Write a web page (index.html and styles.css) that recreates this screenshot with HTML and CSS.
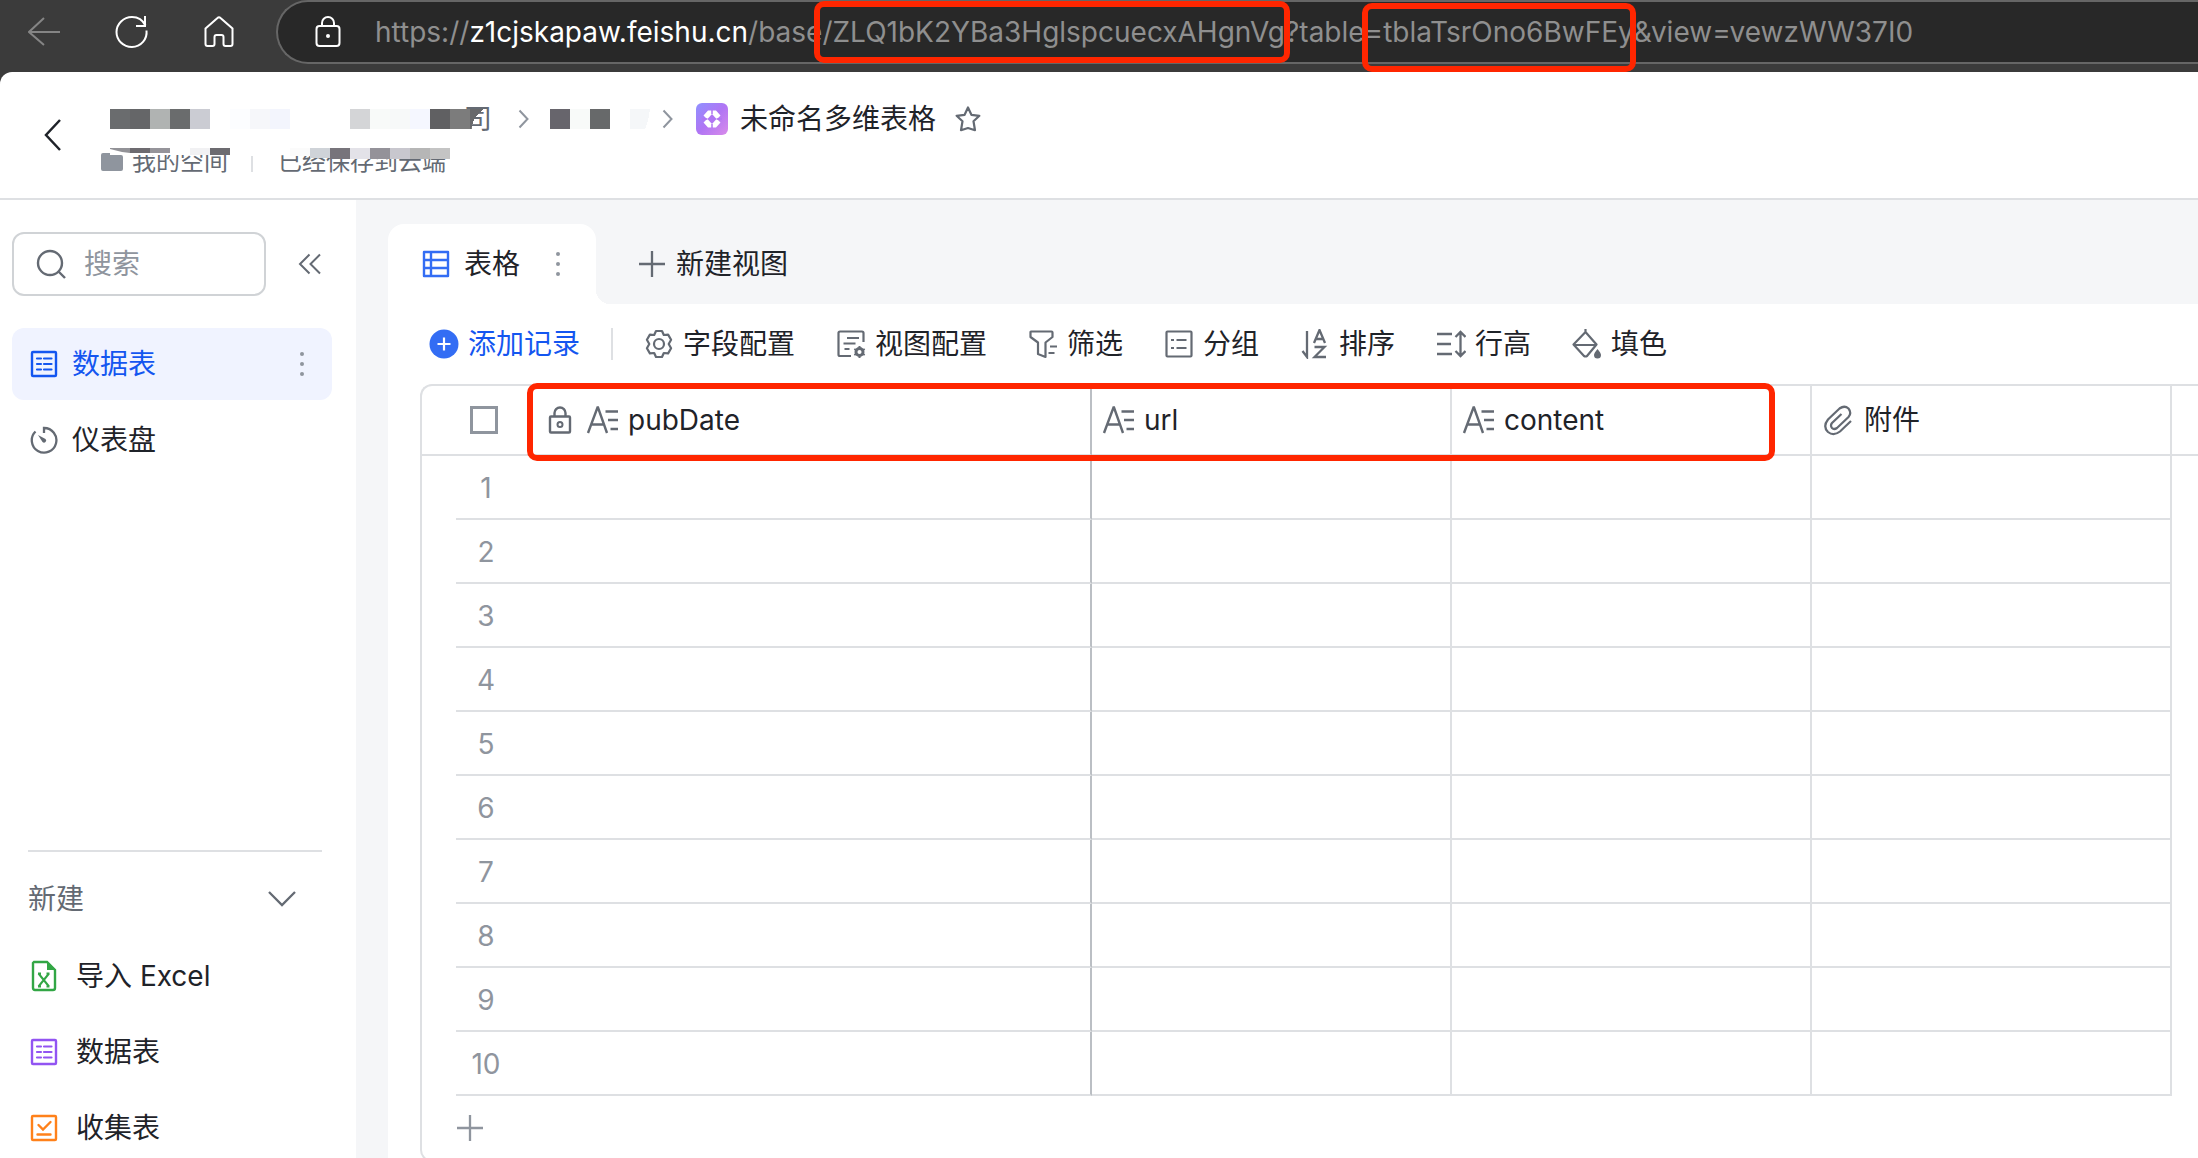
FILE: index.html
```html
<!DOCTYPE html>
<html lang="zh-CN">
<head>
<meta charset="utf-8">
<title>未命名多维表格</title>
<link rel="stylesheet" href="styles.css">
</head>
<body>
<svg class="defs" aria-hidden="true">
  <symbol id="i-text" viewBox="0 0 32 32"><path d="M2 29 11.500 3.500h.5L21 29M5.500 20.500h12.500M19.500 7.500H32M22 16h10M24.500 25H32" fill="none" stroke="currentColor" stroke-width="2.400"/></symbol>
  <symbol id="i-table" viewBox="0 0 28 28"><rect x="2" y="2" width="24" height="24" rx="1" fill="none" stroke="currentColor" stroke-width="2.400"/><path d="M7 8.500h4M7 14h4M7 19.500h4M14 8.500h7.500M14 14h7.500M14 19.500h7.500" fill="none" stroke="currentColor" stroke-width="2.200" stroke-linecap="round"/></symbol>
  <symbol id="i-dots" viewBox="0 0 8 28"><g fill="#8f959e"><circle cx="4" cy="4" r="2"/><circle cx="4" cy="14" r="2"/><circle cx="4" cy="24" r="2"/></g></symbol>
  <symbol id="i-next" viewBox="0 0 12 20"><path d="M1.500 1.500 9.500 10 1.500 18.500" fill="none" stroke="#8f959e" stroke-width="2"/></symbol>
</svg>

<div class="browser">
  <button class="nav" aria-label="后退"><svg width="32" height="32" viewBox="0 0 32 32"><path d="M32 16H1M16 2 1 16l15 13" fill="none" stroke="#858585" stroke-width="2"/></svg></button>
  <button class="nav" aria-label="刷新"><svg width="34" height="34" viewBox="0 0 34 34"><path d="M31.500 15.500C32.500 24 26 32 17 32S1.500 25 1.500 17 8.500 2 17 2c6 0 11 3.500 13.500 8.500M30 1v10h-9" fill="none" stroke="#fff" stroke-width="2"/></svg></button>
  <button class="nav" aria-label="主页"><svg width="30" height="32" viewBox="0 0 30 32"><path d="M1.500 12.500 13.500 2q1.500-1.500 3 0l12 10.500V28q0 2-2 2h-5q-2 0-2-2v-7q0-2-2-2h-5q-2 0-2 2v7q0 2-2 2h-5q-2 0-2-2Z" fill="none" stroke="#fff" stroke-width="2"/></svg></button>
  <div class="address">
    <svg width="26" height="32" viewBox="0 0 26 32"><rect x="1.500" y="10" width="23" height="20" rx="3" fill="none" stroke="#fff" stroke-width="2"/><path d="M7 10V7a6 6 0 0 1 12 0v3" fill="none" stroke="#fff" stroke-width="2"/><circle cx="13" cy="20" r="2" fill="#fff"/></svg>
    <div class="url">https://<span class="host">z1cjskapaw.feishu.cn</span>/base/ZLQ1bK2YBa3HglspcuecxAHgnVg?table=tblaTsrOno6BwFEy&amp;view=vewzWW37I0</div>
  </div>
</div>

<div class="app">
  <header class="header">
    <button class="back" aria-label="返回"><svg width="18" height="32" viewBox="0 0 18 32"><path d="M16 1 2 16l14 15" fill="none" stroke="#1f2329" stroke-width="2.500"/></svg></button>
    <div class="titles">
      <div class="crumbs">
        <svg class="mosaic" width="362" height="20" viewBox="0 0 362 20" shape-rendering="crispEdges">
          <path fill="#6a6c6e" d="M0 0h20v20H0z"/><path fill="#656668" d="M20 0h20v20H20z"/><path fill="#b0b3b2" d="M40 0h20v20H40z"/><path fill="#6a6c6d" d="M60 0h20v20H60z"/><path fill="#cbccd3" d="M80 0h20v20H80z"/>
          <path fill="#fcfdff" d="M120 0h20v20h-20z"/><path fill="#f6f7fa" d="M140 0h20v20h-20z"/><path fill="#f3f5fd" d="M160 0h20v20h-20z"/>
          <path fill="#d4d5d7" d="M240 0h20v20h-20z"/><path fill="#f8faf9" d="M260 0h20v20h-20z"/><path fill="#f7f9f9" d="M280 0h20v20h-20z"/><path fill="#f5f7ff" d="M300 0h20v20h-20z"/><path fill="#606062" d="M320 0h20v20h-20z"/><path fill="#7c7c7c" d="M340 0h22v20h-22z"/><path fill="#68696b" d="M360 0h14q-10 6-13 20h-1z"/>
        </svg>
        <span class="tail">司</span>
        <svg class="next" width="12" height="20"><use href="#i-next"/></svg>
        <svg width="100" height="20" viewBox="0 0 100 20" shape-rendering="crispEdges"><path fill="#67656c" d="M0 0h20v20H0z"/><path fill="#f8faf9" d="M20 0h20v20H20z"/><path fill="#67696a" d="M40 0h20v20H40z"/><path fill="#f5f7f9" d="M80 0h20q-2 14-5 20H80z"/></svg>
        <svg class="next next-last" width="12" height="20"><use href="#i-next"/></svg>
        <svg class="logo" width="32" height="32" viewBox="0 0 32 32"><defs><linearGradient id="lg" x1="0" y1="0" x2="1" y2="1"><stop offset="0" stop-color="#8f91ff"/><stop offset=".5" stop-color="#b075f4"/><stop offset="1" stop-color="#d98bea"/></linearGradient></defs><rect width="32" height="32" rx="6" fill="url(#lg)"/><path d="M16 7.500 12 7.500 7.500 12.500 11 16 7.500 19.500 12 24.500 16 24.500 20 24.500 24.500 19.500 21 16 24.500 12.500 20 7.500Z" fill="#fff"/><path d="M16 11 20.500 16 16 21 11.500 16Z" fill="#b075f4"/><path d="M16 7v4M16 21v4M6 16h5.500M20.500 16H26" stroke="#b075f4" stroke-width="1.500"/></svg>
        <h1>未命名多维表格</h1>
        <button class="star" aria-label="收藏"><svg width="28" height="28" viewBox="0 0 28 28"><path d="m14 2.500 3.400 7.300 8 1-5.900 5.500 1.500 8.900L14 23l-7 2.200 1.500-8.900L2.600 10.800l8-1Z" fill="none" stroke="#646a73" stroke-width="2.200" stroke-linejoin="round"/></svg></button>
      </div>
      <div class="meta">
        <svg class="folder" width="24" height="20" viewBox="0 0 24 20"><path d="M1 3q0-2 2-2h7l2 2h9q2 0 2 2v12q0 2-2 2H3q-2 0-2-2Z" fill="#8f959e"/></svg>
        <span>我的空间</span>
        <i class="bar"></i>
        <span>已经保存到云端</span>
        <svg class="mosaic-over" width="342" height="11" viewBox="0 0 342 11"><path fill="#fff" d="M0 0h340v8H180V7H0z"/><path fill="#929297" d="M0 0h20v5Q10 4 0 1z"/><path fill="#6d6b70" d="M20 0h20v5H20z"/><path fill="#95949a" d="M40 0h20v5H40z"/><path fill="#f1f1f3" d="M80 0h20v7H80z"/><path fill="#6c6b70" d="M100 0h20v7h-20z"/><path fill="#fbfbfb" d="M180 0h20v8h-20z"/><path fill="#cfd3d8" d="M200 0h20v10h-20z"/><path fill="#77747b" d="M220 0h20v11h-20z"/><path fill="#e3e2e8" d="M240 0h20v11h-20z"/><path fill="#949299" d="M260 0h20v11h-20z"/><path fill="#c8c7ce" d="M280 0h20v11h-20z"/><path fill="#b6b6b6" d="M300 0h20v11h-20z"/><path fill="#c4c4c4" d="M320 0h20v11h-20z"/></svg>
      </div>
    </div>
  </header>

  <div class="body">
    <aside class="sidebar">
      <div class="search-row">
        <label class="search"><svg width="30" height="30" viewBox="0 0 30 30"><circle cx="14" cy="14" r="12" fill="none" stroke="#646a73" stroke-width="2.400"/><path d="m22 22 7 7" stroke="#646a73" stroke-width="2.400"/></svg><input type="text" placeholder="搜索" aria-label="搜索"></label>
        <button class="collapse" aria-label="收起"><svg width="24" height="22" viewBox="0 0 24 22"><path d="M11.500 1.500 2 11l9.500 9.500M22 1.500 12.500 11l9.500 9.500" fill="none" stroke="#646a73" stroke-width="2"/></svg></button>
      </div>
      <nav class="items">
        <a class="item active" href="#data"><svg width="28" height="28"><use href="#i-table"/></svg><span>数据表</span><svg class="more" width="8" height="28"><use href="#i-dots"/></svg></a>
        <a class="item" href="#dash"><svg width="28" height="28" viewBox="0 0 28 28"><path d="M14 7V2a12.300 12.300 0 1 1-8.500 3.500" fill="none" stroke="#646a73" stroke-width="2.300"/><path d="m8 9 7.500 4a1.800 1.800 0 1 1-3 3Z" fill="#646a73"/></svg><span>仪表盘</span></a>
      </nav>
      <section class="create">
        <button class="create-head"><span>新建</span><svg width="28" height="16" viewBox="0 0 28 16"><path d="m1 1 13 13L27 1" fill="none" stroke="#646a73" stroke-width="2.300"/></svg></button>
        <nav class="create-list">
          <a href="#excel"><svg width="28" height="32" viewBox="0 0 28 32"><path d="M4 2h13l8 8v18q0 2-2 2H5q-2 0-2-2V3Z" fill="none" stroke="#32a645" stroke-width="2.400"/><path d="M17 1v9h9Z" fill="#32a645"/><path d="m8.500 13.500 10.500 13M19 13.500l-10.500 13M8 13.500h3M16.500 13.500h3M8 26.500h3M16.500 26.500h3" stroke="#32a645" stroke-width="2"/></svg><span>导入 Excel</span></a>
          <a href="#table"><svg class="violet" width="28" height="28"><use href="#i-table"/></svg><span>数据表</span></a>
          <a href="#form"><svg width="28" height="28" viewBox="0 0 28 28"><g fill="none" stroke="#ff811a" stroke-width="2.400"><rect x="2" y="2" width="24" height="24" rx="1"/><path d="m8.500 11 4.500 4.500 7.500-7.500M7.500 20.500h13" stroke-linecap="round"/></g></svg><span>收集表</span></a>
        </nav>
      </section>
    </aside>

    <main class="main">
      <div class="tabs">
        <div class="tab"><svg width="28" height="28" viewBox="0 0 28 28"><path d="M2 2h24v24H2ZM9 2v24M2 10h24M2 18h24" fill="none" stroke="#336df4" stroke-width="2.400" stroke-linejoin="round"/></svg><span>表格</span><button class="tab-more" aria-label="更多"><svg width="8" height="28"><use href="#i-dots"/></svg></button></div>
        <button class="new-view"><svg width="28" height="28" viewBox="0 0 28 28"><path d="M14 1v26M1 14h26" stroke="#646a73" stroke-width="2.300"/></svg>新建视图</button>
      </div>
      <div class="panel">
        <div class="toolbar">
          <button class="add"><svg width="30" height="30" viewBox="0 0 30 30"><circle cx="15" cy="15" r="14.500" fill="#336df4"/><path d="M15 8.500v13M8.500 15h13" stroke="#fff" stroke-width="2.200"/></svg>添加记录</button>
          <i class="sep"></i>
          <button><svg width="30" height="30" viewBox="0 0 30 30"><path d="M12 2h6l1.800 4 4.300-.4 3 5.200L24.700 15l2.400 4.200-3 5.200-4.300-.4L18 28h-6l-1.800-4-4.300.4-3-5.200L5.300 15l-2.400-4.200 3-5.200 4.300.4Z" fill="none" stroke="#646a73" stroke-width="2.200" stroke-linejoin="round"/><circle cx="15" cy="15" r="5" fill="none" stroke="#646a73" stroke-width="2.200"/></svg>字段配置</button>
          <button><svg width="30" height="30" viewBox="0 0 30 30"><path d="M15 27H4q-1.500 0-1.500-1.500V4Q2.500 2.500 4 2.500h22q1.500 0 1.500 1.500v9M11 9h12M7.500 14.500h12M8.500 20h5" fill="none" stroke="#646a73" stroke-width="2.200"/><circle cx="23.500" cy="23" r="3.500" fill="none" stroke="#646a73" stroke-width="3"/><path d="M23.500 17v12M18.300 20l10.400 6M18.300 26l10.400-6" stroke="#646a73" stroke-width="2"/><circle cx="23.500" cy="23" r="2" fill="#fff"/></svg>视图配置</button>
          <button><svg width="30" height="30" viewBox="0 0 30 30"><path d="M3 2.500h20.500q1 0 1 1V8l-7 5.500V28L10 25V13.500L2.500 8V3Z" fill="none" stroke="#646a73" stroke-width="2.200" stroke-linejoin="round"/><path d="M22 17.500h7M20.500 24h6" stroke="#646a73" stroke-width="2.200"/></svg>筛选</button>
          <button><svg width="30" height="30" viewBox="0 0 30 30"><rect x="2.500" y="2.500" width="25" height="25" rx="1" fill="none" stroke="#646a73" stroke-width="2.200"/><path d="M7 11h3M7 19h3M12.500 11h10M12.500 19h10" stroke="#646a73" stroke-width="2.200"/></svg>分组</button>
          <button><svg width="30" height="30" viewBox="0 0 30 30"><path d="M7 2v26L2.500 22M14 14l5.500-13L25 14M16 10h7M14.500 18h10L14.500 28H26" fill="none" stroke="#646a73" stroke-width="2.300"/></svg>排序</button>
          <button><svg width="30" height="30" viewBox="0 0 30 30"><path d="M1 5h15M1 15h14M1 25h15M24.500 3v24M19.500 8l5-5 5 5M19.500 22l5 5 5-5" fill="none" stroke="#646a73" stroke-width="2.300"/></svg>行高</button>
          <button><svg width="30" height="30" viewBox="0 0 30 30"><path d="M13.500 0v3M13.500 3 24.500 15.500 15 27q-1.500 1-3 0L1.500 15.500ZM2 16h22" fill="none" stroke="#646a73" stroke-width="2.200" stroke-linejoin="round"/><path d="M25.500 20q3.500 4 3.500 6a3.500 3.500 0 0 1-7 0q0-2 3.500-6Z" fill="#646a73"/></svg>填色</button>
        </div>
        <div class="grid">
          <table>
            <colgroup><col class="c-gap"><col class="c-num"><col class="c-main"><col class="c"><col class="c"><col class="c"><col></colgroup>
            <thead><tr>
              <th></th><th class="check"><input type="checkbox" aria-label="全选"></th>
              <th class="primary"><div class="field lead"><svg class="lock" width="24" height="28" viewBox="0 0 24 28"><rect x="2" y="10.500" width="20" height="16" rx="1" fill="none" stroke="currentColor" stroke-width="2.400"/><path d="M6.500 10V7a5.500 5.500 0 0 1 11 0v3" fill="none" stroke="currentColor" stroke-width="2.400"/><circle cx="12" cy="18.500" r="2.500" fill="none" stroke="currentColor" stroke-width="2"/></svg><svg width="32" height="32"><use href="#i-text"/></svg><span>pubDate</span></div></th>
              <th class="col"><div class="field"><svg width="32" height="32"><use href="#i-text"/></svg><span>url</span></div></th>
              <th class="col"><div class="field"><svg width="32" height="32"><use href="#i-text"/></svg><span>content</span></div></th>
              <th class="col"><div class="field"><svg width="32" height="32" viewBox="0 0 32 32"><path d="M29 17 18 27.500Q11.500 32.500 6 28 .500 22.500 6 15.500L17.500 4.500q5-3.500 9 0 3.500 4.500 0 8.500L15 24q-3 2-5 0-2-2.500 0-5L19.500 10" fill="none" stroke="currentColor" stroke-width="2.200"/></svg><span>附件</span></div></th>
              <th></th>
            </tr></thead>
            <tbody>
              <tr><td></td><td class="num">1</td><td class="primary"></td><td class="col"></td><td class="col"></td><td class="col"></td><td></td></tr>
              <tr><td></td><td class="num">2</td><td class="primary"></td><td class="col"></td><td class="col"></td><td class="col"></td><td></td></tr>
              <tr><td></td><td class="num">3</td><td class="primary"></td><td class="col"></td><td class="col"></td><td class="col"></td><td></td></tr>
              <tr><td></td><td class="num">4</td><td class="primary"></td><td class="col"></td><td class="col"></td><td class="col"></td><td></td></tr>
              <tr><td></td><td class="num">5</td><td class="primary"></td><td class="col"></td><td class="col"></td><td class="col"></td><td></td></tr>
              <tr><td></td><td class="num">6</td><td class="primary"></td><td class="col"></td><td class="col"></td><td class="col"></td><td></td></tr>
              <tr><td></td><td class="num">7</td><td class="primary"></td><td class="col"></td><td class="col"></td><td class="col"></td><td></td></tr>
              <tr><td></td><td class="num">8</td><td class="primary"></td><td class="col"></td><td class="col"></td><td class="col"></td><td></td></tr>
              <tr><td></td><td class="num">9</td><td class="primary"></td><td class="col"></td><td class="col"></td><td class="col"></td><td></td></tr>
              <tr><td></td><td class="num">10</td><td class="primary"></td><td class="col"></td><td class="col"></td><td class="col"></td><td></td></tr>
            </tbody>
          </table>
          <button class="add-row" aria-label="新增一行"><svg width="28" height="28" viewBox="0 0 28 28"><path d="M14 1v26M1 14h26" stroke="#8f959e" stroke-width="2.300"/></svg></button>
        </div>
      </div>
    </main>
  </div>
</div>

<div class="mark mark-base"></div>
<div class="mark mark-table"></div>
<div class="mark mark-fields"></div>
</body>
</html>
```
FILE: styles.css
```css
* { box-sizing: border-box; }
body {
  margin: 0;
  height: 100vh;
  display: flex;
  flex-direction: column;
  overflow: hidden;
  position: relative;
  background: #3b3b3b;
  color: #1f2329;
  font: 28px/40px Inter, "Noto Sans CJK SC", sans-serif;
}
svg { flex: none; display: block; }
.defs { position: absolute; width: 0; height: 0; }
button {
  border: 0;
  padding: 0;
  background: none;
  color: inherit;
  font: inherit;
  display: flex;
  align-items: center;
}
a { color: inherit; text-decoration: none; }

/* Browser bar */
.browser {
  flex: none;
  height: 72px;
  padding: 0 0 8px 28px;
  display: flex;
  align-items: center;
  gap: 55px;
}
.address {
  flex: 1;
  min-width: 0;
  height: 64px;
  margin-left: -13px;
  padding-left: 37px;
  display: flex;
  align-items: center;
  gap: 34px;
  background: #282828;
  border: 2px solid #666;
  border-right: 0;
  border-radius: 32px 0 0 32px;
}
.url { color: #8f8f8f; white-space: nowrap; }
.host { color: #fff; }

/* Page header */
.app {
  flex: 1;
  min-height: 0;
  display: flex;
  flex-direction: column;
  background: #fff;
  border-top-left-radius: 12px;
}
.header {
  flex: none;
  height: 128px;
  padding-left: 44px;
  display: flex;
  gap: 48px;
  border-bottom: 2px solid #dee0e3;
}
.titles { padding-top: 27px; }
.crumbs { height: 40px; display: flex; align-items: center; }
.mosaic { position: relative; z-index: 1; overflow: visible; }
.tail { margin-left: -8px; color: #646a73; }
.next { margin: 0 20px 0 26px; }
.next-last { margin: 0 22px 0 12px; }
.crumbs h1 { margin: 0 18px 0 12px; font: inherit; }
.meta {
  position: relative;
  height: 28px;
  margin-top: 9px;
  display: flex;
  align-items: center;
  font-size: 24px;
  line-height: 28px;
  color: #646a73;
}
.folder { margin: 0 8px 0 -10px; }
.bar { width: 2px; height: 16px; margin: 4px 25px 0 23px; background: #dee0e3; }
.mosaic-over { position: absolute; left: 0; top: 0; }

/* Sidebar */
.body { flex: 1; min-height: 0; display: flex; }
.sidebar {
  flex: none;
  width: 356px;
  padding: 32px 24px 0 12px;
  display: flex;
  flex-direction: column;
}
.search-row { display: flex; align-items: center; gap: 32px; }
.search {
  width: 254px;
  height: 64px;
  padding: 0 22px;
  display: flex;
  align-items: center;
  gap: 18px;
  border: 2px solid #d0d3d6;
  border-radius: 12px;
}
.search input {
  width: 100%;
  min-width: 0;
  border: 0;
  padding: 0;
  outline: 0;
  background: none;
  font: inherit;
}
.search input::placeholder { color: #8f959e; opacity: 1; }
.items { margin-top: 32px; display: flex; flex-direction: column; gap: 4px; }
.item {
  height: 72px;
  padding: 0 26px 0 18px;
  display: flex;
  align-items: center;
  gap: 14px;
  border-radius: 12px;
}
.active { background: #f0f3ff; color: #1456f0; }
.more { margin-left: auto; }
.create {
  margin: auto 10px 0 16px;
  border-top: 2px solid #dee0e3;
}
.create-head {
  width: 100%;
  height: 94px;
  padding-right: 26px;
  justify-content: space-between;
  color: #646a73;
}
.create-list { display: flex; flex-direction: column; gap: 16px; }
.create-list a { height: 60px; padding-left: 2px; display: flex; align-items: center; gap: 18px; }
.violet { color: #9254f2; }

/* Views */
.main {
  flex: 1;
  min-width: 0;
  padding: 24px 0 0 32px;
  display: flex;
  flex-direction: column;
  overflow: hidden;
  background: #f5f6f8;
}
.tabs { flex: none; height: 80px; display: flex; gap: 42px; }
.tab {
  position: relative;
  width: 208px;
  padding: 0 34px;
  display: flex;
  align-items: center;
  gap: 14px;
  background: #fff;
  border-radius: 16px 16px 0 0;
}
.tab::after {
  content: "";
  position: absolute;
  left: 100%;
  bottom: 0;
  width: 14px;
  height: 14px;
  background: radial-gradient(circle at 100% 0, #f5f6f8 14px, #fff 14px);
}
.tab-more { margin-left: 20px; }
.new-view { gap: 10px; }
.panel { flex: 1; min-height: 0; padding-left: 32px; background: #fff; }
.toolbar { height: 80px; padding-left: 9px; display: flex; align-items: center; gap: 41px; white-space: nowrap; }
.toolbar button { gap: 9px; }
.toolbar .add { color: #1456f0; }
.sep { width: 2px; height: 32px; margin: 0 -10px; background: #dee0e3; }

/* Data grid */
.grid {
  border: 2px solid #dee0e3;
  border-right: 0;
  border-radius: 12px 0 0 12px;
}
table { width: 100%; table-layout: fixed; border-collapse: separate; border-spacing: 0; }
.c-gap { width: 34px; }
.c-num { width: 58px; }
.c-main { width: 578px; }
.c { width: 360px; }
th, td { padding: 0; font-weight: 400; text-align: left; }
th { height: 70px; border-bottom: 2px solid #dee0e3; }
td { height: 64px; }
td.num, td.primary, td.col { border-bottom: 2px solid #dee0e3; }
.col { border-right: 2px solid #dee0e3; }
.primary { border-right: 2px solid #bbbfc4; }
td.num { padding: 2px 0 0 2px; text-align: center; color: #8f959e; }
.check input {
  appearance: none;
  display: block;
  width: 28px;
  height: 28px;
  margin: 0 0 0 14px;
  border: 3px solid #8f959e;
}
.field { display: flex; align-items: center; gap: 10px; padding-left: 10px; }
.field svg { color: #646a73; }
.lead { padding-left: 34px; }
.lock { margin-right: 4px; }
.add-row { height: 64px; padding-left: 34px; }

/* Highlight frames drawn over the page */
.mark { position: absolute; border: 6px solid #ff2600; border-radius: 10px; }
.mark-base { left: 814px; top: 1px; width: 476px; height: 62px; }
.mark-table { left: 1362px; top: 3px; width: 274px; height: 69px; }
.mark-fields { left: 527px; top: 383px; width: 1248px; height: 78px; }
```
